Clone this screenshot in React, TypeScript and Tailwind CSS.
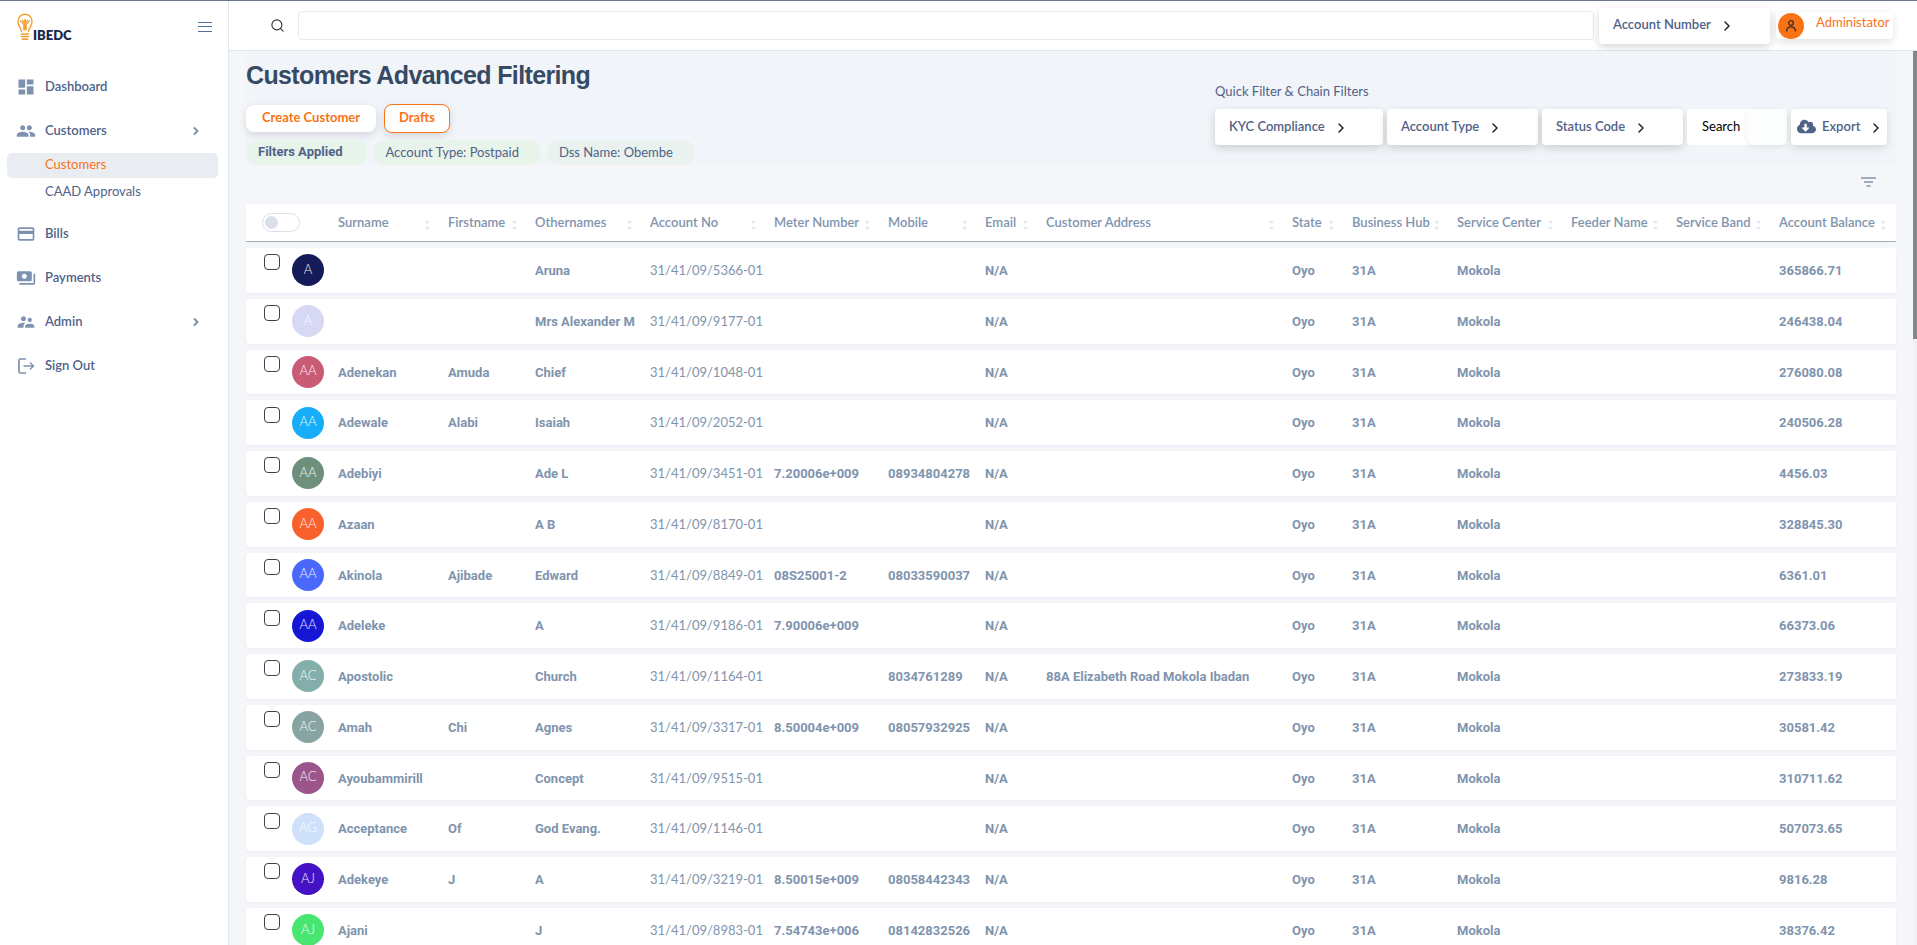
import React from "react";
import { ChevronRight, Search } from "lucide-react";
import { FaCloudDownloadAlt } from "react-icons/fa";
import { MdDashboard, MdPeople, MdPayments, MdSupervisorAccount, MdCreditCard } from "react-icons/md";

type Col = { label: string; width: string };

const columns: Col[] = [
  { label: "Surname", width: "w-[110px]" },
  { label: "Firstname", width: "w-[87px]" },
  { label: "Othernames", width: "w-[115px]" },
  { label: "Account No", width: "w-[124px]" },
  { label: "Meter Number", width: "w-[114px]" },
  { label: "Mobile", width: "w-[97px]" },
  { label: "Email", width: "w-[61px]" },
  { label: "Customer Address", width: "w-[246px]" },
  { label: "State", width: "w-[60px]" },
  { label: "Business Hub", width: "w-[105px]" },
  { label: "Service Center", width: "w-[114px]" },
  { label: "Feeder Name", width: "w-[105px]" },
  { label: "Service Band", width: "w-[103px]" },
  { label: "Account Balance", width: "w-[125px]" },
];

type Customer = {
  initials: string;
  color: string;
  surname?: string;
  first?: string;
  other: string;
  account: string;
  meter?: string;
  mobile?: string;
  address?: string;
  balance: string;
};

const customers: Customer[] = [
  { initials: "A", color: "bg-[#151b58]", other: "Aruna", account: "31/41/09/5366-01", balance: "365866.71" },
  { initials: "A", color: "bg-[#d6d8f4]", other: "Mrs Alexander M", account: "31/41/09/9177-01", balance: "246438.04" },
  { initials: "AA", color: "bg-[#c95c74]", surname: "Adenekan", first: "Amuda", other: "Chief", account: "31/41/09/1048-01", balance: "276080.08" },
  { initials: "AA", color: "bg-[#18adf8]", surname: "Adewale", first: "Alabi", other: "Isaiah", account: "31/41/09/2052-01", balance: "240506.28" },
  { initials: "AA", color: "bg-[#6d907c]", surname: "Adebiyi", other: "Ade L", account: "31/41/09/3451-01", meter: "7.20006e+009", mobile: "08934804278", balance: "4456.03" },
  { initials: "AA", color: "bg-[#f9602c]", surname: "Azaan", other: "A B", account: "31/41/09/8170-01", balance: "328845.30" },
  { initials: "AA", color: "bg-[#4a68fb]", surname: "Akinola", first: "Ajibade", other: "Edward", account: "31/41/09/8849-01", meter: "08S25001-2", mobile: "08033590037", balance: "6361.01" },
  { initials: "AA", color: "bg-[#1617d5]", surname: "Adeleke", other: "A", account: "31/41/09/9186-01", meter: "7.90006e+009", balance: "66373.06" },
  { initials: "AC", color: "bg-[#84aeaa]", surname: "Apostolic", other: "Church", account: "31/41/09/1164-01", mobile: "8034761289", address: "88A Elizabeth Road Mokola Ibadan", balance: "273833.19" },
  { initials: "AC", color: "bg-[#88a4a2]", surname: "Amah", first: "Chi", other: "Agnes", account: "31/41/09/3317-01", meter: "8.50004e+009", mobile: "08057932925", balance: "30581.42" },
  { initials: "AC", color: "bg-[#9b558b]", surname: "Ayoubammirill", other: "Concept", account: "31/41/09/9515-01", balance: "310711.62" },
  { initials: "AG", color: "bg-[#cfe0fb]", surname: "Acceptance", first: "Of", other: "God Evang.", account: "31/41/09/1146-01", balance: "507073.65" },
  { initials: "AJ", color: "bg-[#4411c5]", surname: "Adekeye", first: "J", other: "A", account: "31/41/09/3219-01", meter: "8.50015e+009", mobile: "08058442343", balance: "9816.28" },
  { initials: "AJ", color: "bg-[#48e670]", surname: "Ajani", other: "J", account: "31/41/09/8983-01", meter: "7.54743e+006", mobile: "08142832526", balance: "38376.42" },
];

function SignOutIcon() {
  return (
    <svg viewBox="0 0 20 20" className="size-5" fill="none" stroke="currentColor">
      <path d="M10 3H4.500a1.500 1.500 0 0 0-1.500 1.500v11A1.500 1.500 0 0 0 4.500 17H10" strokeWidth="1.700" />
      <path d="M7.500 10h10M14 6.500l3.500 3.500-3.500 3.500" strokeWidth="1.400" />
    </svg>
  );
}

function MenuIcon() {
  return (
    <svg viewBox="0 0 14 10" className="h-2.5 w-3.5" stroke="currentColor" strokeWidth="1">
      <path d="M0 .5h14M0 4.500h14M0 9.500h14" />
    </svg>
  );
}

function FilterIcon() {
  return (
    <svg viewBox="0 0 15 10" className="h-2.5 w-[15px]" stroke="currentColor" strokeWidth="1.200">
      <path d="M0 1h15M3 5h9M5.500 9h4" />
    </svg>
  );
}

function UserIcon() {
  return (
    <svg viewBox="0 0 12 14" className="h-3.5 w-3" fill="none" stroke="currentColor" strokeWidth="1.300" strokeLinecap="round">
      <circle cx="6" cy="4" r="2.300" />
      <path d="M1.500 11.800C2 8.800 4 7.900 6 7.900s4 .9 4.500 3.900" />
    </svg>
  );
}

function Logo() {
  return (
    <a href="#" aria-label="IBEDC home" className="flex items-end text-[#15294b]">
      <svg viewBox="0 0 16 28" className="h-7 w-4" fill="none" stroke="#f5a02f" strokeLinecap="round">
        <path d="M4.500 18.500C4.500 15.500 1 13.500 1 8.200A7 7 0 0 1 15 8.200C15 13.500 11.500 15.500 11.500 18.500" strokeWidth="1.400" />
        <circle cx="8" cy="7.600" r="1.300" fill="#f5a02f" stroke="none" />
        <path d="M3.500 7.800 6.800 11.500v5.300M12.500 7.800 9.200 11.500v5.300M5.500 7.500 8 10.500l2.500-3M8 11v6" strokeWidth="1.200" />
        <path d="M4.500 21h7M4.500 23.500h7M5.500 26.200h5" strokeWidth="1.700" />
      </svg>
      <span className="text-[13px] leading-3 font-extrabold">IBEDC</span>
    </a>
  );
}

function NavItem({ icon, label, arrow }: { icon: React.ReactNode; label: string; arrow?: boolean }) {
  return (
    <a href="#" className="flex h-11 items-center pr-[26px] pl-4 text-[#7d92ae]">
      <span className="flex w-[29px] shrink-0">{icon}</span>
      <span className="flex-1 text-[13px] font-semibold text-[#506288]">{label}</span>
      {arrow && <ChevronRight size={12} strokeWidth={4} />}
    </a>
  );
}

function FilterButton({ label, className }: { label: string; className: string }) {
  return (
    <button className={"flex h-9 items-center gap-2 rounded bg-white pb-px pl-3.5 text-[13px] font-semibold whitespace-nowrap shadow-[0_3px_8px_rgba(0,0,0,0.16)] " + className}>
      {label}
      <ChevronRight size={16} strokeWidth={2.2} className="mt-0.5 text-[#222]" />
    </button>
  );
}

function SortMark() {
  return (
    <svg viewBox="0 0 5 8" className="mt-1 h-2 w-[5px] shrink-0" fill="#e6e9ef">
      <path d="M0 0h5L2.500 3.500zM0 8h5L2.500 4.500z" />
    </svg>
  );
}

export default function App() {
  return (
    <div className="flex h-screen overflow-hidden border-t border-[#6b7784] bg-[#f4f6fa] font-['Lato',sans-serif] text-[#506288]">
      <aside className="w-[229px] shrink-0 border-r border-[#e3e7ee] bg-white">
        <div className="flex h-16 items-start justify-between pt-3 pr-4 pl-[17px]">
          <Logo />
          <button aria-label="Toggle menu" className="pt-[9px] text-[#506f98]"><MenuIcon /></button>
        </div>
        <nav>
          <NavItem icon={<MdDashboard size={20} />} label="Dashboard" />
          <NavItem icon={<MdPeople size={20} />} label="Customers" arrow />
          <div className="pr-2.5 pb-[5px] pl-[7px] text-[13px]">
            <a href="#" className="flex h-[25px] items-center rounded-[5px] bg-[#e9edf2] pb-px pl-[38px] text-[#f97316]">Customers</a>
            <a href="#" className="flex h-[29px] items-center pb-px pl-[38px]">CAAD Approvals</a>
          </div>
          <NavItem icon={<MdCreditCard size={20} />} label="Bills" />
          <NavItem icon={<MdPayments size={20} />} label="Payments" />
          <NavItem icon={<MdSupervisorAccount size={20} />} label="Admin" arrow />
          <NavItem icon={<SignOutIcon />} label="Sign Out" />
        </nav>
      </aside>

      <div className="flex min-w-0 flex-1 flex-col">
        <header className="flex h-[50px] shrink-0 items-center border-b border-[#e1e6ee] bg-white pr-6 pl-[41px]">
          <Search size={15} strokeWidth={1.8} className="text-[#333]" />
          <input aria-label="Search customers" className="ml-[13px] h-[29px] min-w-0 flex-1 rounded border border-[#e6e8ec] px-2 text-[13px]" />
          <FilterButton label="Account Number" className="ml-[5px] w-[171px]" />
          <button className="ml-1.5 flex h-[27px] w-[117px] items-center gap-3 rounded bg-white pl-0.5 text-[13px] text-[#f97316] shadow-[0_3px_8px_rgba(0,0,0,0.12)]">
            <span className="flex size-[26px] items-center justify-center rounded-full bg-[#f97316] text-[#3a2a20]"><UserIcon /></span>
            <span className="pb-1.5">Administator</span>
          </button>
        </header>

        <div className="flex min-h-0 flex-1">
          <main className="min-w-0 flex-1 overflow-hidden px-[17px]">
            <section className="flex items-start justify-between bg-[#f1f4f8]">
              <div>
                <h1 className="pt-2 font-['Liberation_Sans',sans-serif] text-[25px] leading-8 font-bold tracking-tight text-[#364a63]">Customers Advanced Filtering</h1>
                <div className="mt-[13px] flex items-center gap-2 text-[13px] font-bold text-[#f97316]">
                  <button className="h-[27px] rounded-lg bg-white px-4 pb-0.5 shadow-[0_3px_8px_rgba(0,0,0,0.12)]">Create Customer</button>
                  <button className="h-[29px] rounded-lg border border-[#f97316] bg-white px-3.5 pb-0.5 shadow-[0_3px_8px_rgba(0,0,0,0.12)]">Drafts</button>
                </div>
                <div className="mt-[7px] flex gap-1.5 text-[13px] leading-6">
                  <span className="h-[25px] rounded-full bg-[#e6f4e9] pr-[25px] pl-3 font-['Roboto',sans-serif] font-bold">Filters Applied</span>
                  <span className="h-[25px] rounded-full bg-[#e8f3ea] pr-[22px] pl-3">Account Type: Postpaid</span>
                  <span className="h-[25px] rounded-full bg-[#e9f2ee] pr-[22px] pl-3">Dss Name: Obembe</span>
                </div>
              </div>
              <div className="flex flex-col pt-[30px] pr-[9px]">
                <p className="text-[13px] leading-5">Quick Filter &amp; Chain Filters</p>
                <div className="mt-2 flex gap-1">
                  <FilterButton label="KYC Compliance" className="w-[168px]" />
                  <FilterButton label="Account Type" className="w-[151px]" />
                  <FilterButton label="Status Code" className="w-[141px]" />
                  <label className="flex h-9 w-[100px] items-center rounded bg-white text-[13px] text-black">
                    <span className="pb-px pl-[15px] whitespace-nowrap">Search</span>
                    <input className="ml-auto h-9 w-10 rounded-lg bg-[#fcfdfd] shadow-[0_2px_6px_rgba(0,0,0,0.08)]" />
                  </label>
                  <button className="flex h-9 w-24 items-center rounded bg-white pb-px pl-1.5 text-[13px] font-semibold shadow-[0_3px_8px_rgba(0,0,0,0.12)]">
                    <FaCloudDownloadAlt size={19} className="mr-1.5" />
                    Export
                    <ChevronRight size={16} strokeWidth={2.2} className="mt-0.5 ml-2 text-[#222]" />
                  </button>
                </div>
              </div>
            </section>
            <div className="flex h-[33px] items-center justify-end pr-5">
              <button aria-label="Show filters"><FilterIcon /></button>
            </div>
            <table className="w-full table-fixed border-separate border-spacing-x-0 border-spacing-y-1.5 text-left">
              <colgroup>
                <col className="w-[84px]" />
                {columns.map((c) => <col key={c.label} className={c.width} />)}
              </colgroup>
              <thead>
                <tr className="h-[38px] bg-white">
                  <th className="border-b border-[#a9adb3] pl-4">
                    <input type="checkbox" role="switch" aria-label="Select all customers" className="block h-[19px] w-[38px] appearance-none rounded-full border border-[#dbdfea] before:m-0.5 before:block before:size-[13px] before:rounded-full before:bg-[#dbdfea]" />
                  </th>
                  {columns.map((c) => (
                    <th key={c.label} className="border-b border-[#a9adb3] pr-2.5 pl-2 text-[13px] font-semibold whitespace-nowrap text-[#8094ae]">
                      <div className="flex items-center justify-between">{c.label}<SortMark /></div>
                    </th>
                  ))}
                </tr>
              </thead>
              <tbody className="text-sm leading-relaxed whitespace-nowrap text-[#8094ae]">
                {customers.map((c) => (
                  <tr key={c.account} className="rounded bg-white shadow-[0_1px_3px_rgba(54,74,99,0.06)]">
                    <td className="rounded-l pl-[18px]">
                      <div className="flex items-start gap-3">
                        <input type="checkbox" aria-label={"Select " + c.account} className="size-4 appearance-none rounded border border-[#3c4250] bg-white" />
                        <span className={"flex size-8 items-center justify-center rounded-full pb-0.5 text-[13px] font-light text-white/90 " + c.color}>{c.initials}</span>
                      </div>
                    </td>
                    {[c.surname, c.first, c.other, c.account, c.meter, c.mobile, "N/A", c.address, "Oyo", "31A", "Mokola", "", "", c.balance].map((v, i) => (
                      <td key={i} className="px-2 py-[11px]">
                        <span className={i === 3 ? "text-[13px]" : "font-['Roboto',sans-serif] text-[13px] font-bold"}>{v}</span>
                      </td>
                    ))}
                  </tr>
                ))}
              </tbody>
            </table>
          </main>
          <div className="w-1 bg-[#f1f1f1]"><div className="h-72 bg-[#838785]" /></div>
        </div>
      </div>
    </div>
  );
}
